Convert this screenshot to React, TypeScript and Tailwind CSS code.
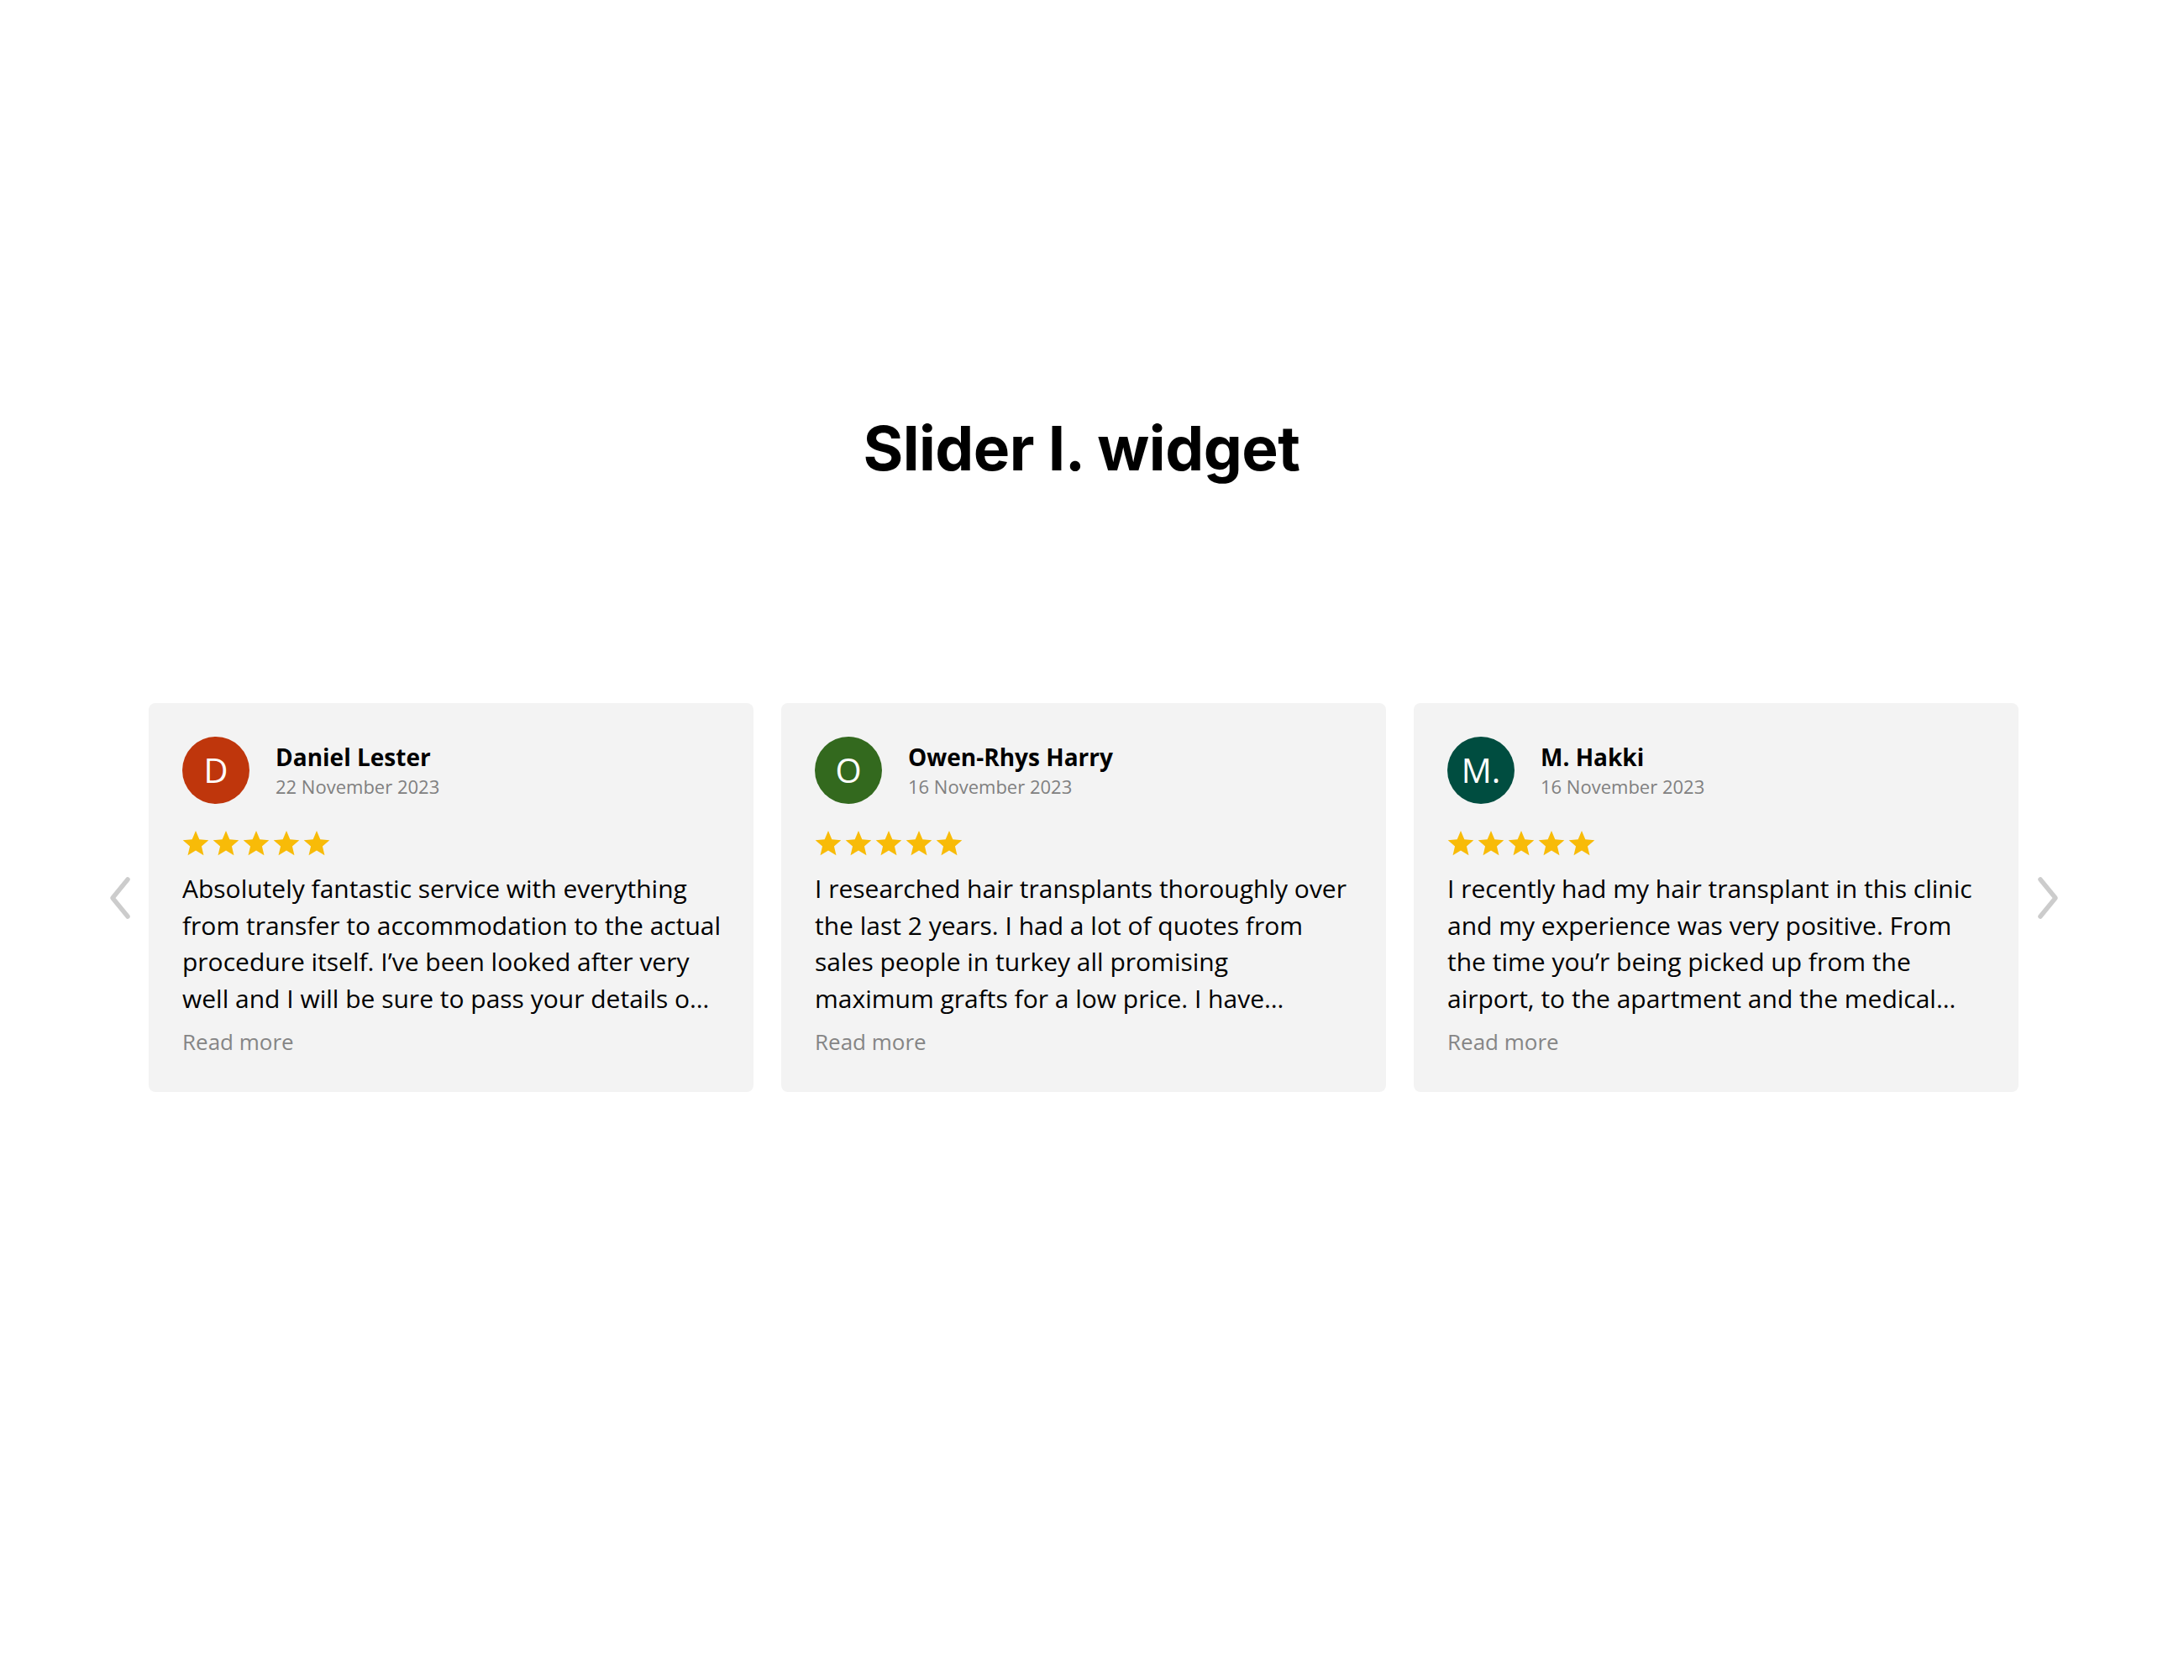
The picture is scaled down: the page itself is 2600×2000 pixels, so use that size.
import React from "react";

type Review = { initial: string; color: string; name: string; date: string; text: string };

const reviews: Review[] = [
  {
    initial: "D",
    color: "bg-[#bf360c]",
    name: "Daniel Lester",
    date: "22 November 2023",
    text: "Absolutely fantastic service with everything from transfer to accommodation to the actual procedure itself. I’ve been looked after very well and I will be sure to pass your details on to friends and family who are considering it.",
  },
  {
    initial: "O",
    color: "bg-[#33691e]",
    name: "Owen-Rhys Harry",
    date: "16 November 2023",
    text: "I researched hair transplants thoroughly over the last 2 years. I had a lot of quotes from sales people in turkey all promising\nmaximum grafts for a low price. I have travelled to many clinics and this one was by far the best.",
  },
  {
    initial: "M.",
    color: "bg-[#004d40]",
    name: "M. Hakki",
    date: "16 November 2023",
    text: "I recently had my hair transplant in this clinic and my experience was very positive. From the time you’r being picked up from the airport, to the apartment and the medical treatment, everything was perfect.",
  },
];

function Star() {
  return (
    <svg width="34" height="32" viewBox="0 0 24 23" className="block">
      <path
        d="M12 0.8l3.1 7.3 7.9 0.7-6 5.2 1.8 7.7L12 17.6l-6.8 4.1 1.8-7.7-6-5.2 7.9-0.7z"
        fill="#f8bb08"
      />
    </svg>
  );
}

function Chevron({ dir }: { dir: "left" | "right" }) {
  return (
    <svg width="30" height="52" viewBox="0 0 30 52" fill="none">
      <path
        d={dir === "left" ? "M24 4 L6 26 L24 48" : "M6 4 L24 26 L6 48"}
        stroke="#cccccc"
        strokeWidth="5.5"
        strokeLinecap="round"
        strokeLinejoin="round"
      />
    </svg>
  );
}

function Card({ r }: { r: Review }) {
  return (
    <div className="w-[720px] h-[463px] bg-[#f3f3f3] rounded-[8px] pt-[40px] pl-[40px] pr-[38px] flex flex-col">
      <div className="flex items-center">
        <div
          className={`w-[80px] h-[80px] rounded-full ${r.color} flex items-center justify-center text-white text-[40px] leading-none`}
        >
          {r.initial}
        </div>
        <div className="ml-[31px] flex flex-col">
          <div className="text-[28px] font-bold text-black leading-[36px]">{r.name}</div>
          <div className="text-[22px] text-[#808080] leading-[30px] mt-[2px]">{r.date}</div>
        </div>
      </div>
      <div className="flex gap-[2px] mt-[31px] -ml-[1px]">
        <Star />
        <Star />
        <Star />
        <Star />
        <Star />
      </div>
      <p className="mt-[16px] text-[30px] leading-[43.6px] text-black line-clamp-4 whitespace-pre-line">
        {r.text}
      </p>
      <div className="mt-[12px] text-[26px] leading-[36px] text-[#858585]">Read more</div>
    </div>
  );
}

export default function App() {
  return (
    <div
      className="w-[2600px] h-[2000px] bg-white"
      style={{ fontFamily: '"Open Sans", "Noto Sans", sans-serif' }}
    >
      <div className="pt-[486px] h-[837px]">
        <h1
          className="text-center text-[73px] leading-[96px] font-bold text-black pr-[25px] tracking-[-0.5px]"
          style={{ fontFamily: 'Inter, "Liberation Sans", sans-serif' }}
        >
          Slider I. widget
        </h1>
      </div>
      <div className="flex items-center pl-[109px]">
        <div className="w-[68px] flex justify-center">
          <Chevron dir="left" />
        </div>
        <div className="flex gap-[33px]">
          {reviews.map((r) => (
            <Card key={r.name} r={r} />
          ))}
        </div>
        <div className="w-[70px] flex justify-center">
          <Chevron dir="right" />
        </div>
      </div>
    </div>
  );
}
